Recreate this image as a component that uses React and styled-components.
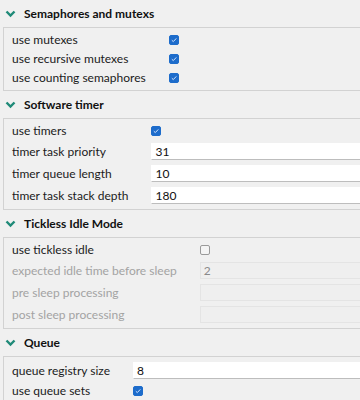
import React from 'react';
import styled, { createGlobalStyle } from 'styled-components';

const GlobalStyle = createGlobalStyle`
  html, body {
    margin: 0;
    padding: 0;
    background: #f0f0f0;
    overflow: hidden;
  }
  body {
    font-family: Lato, 'Noto Sans', 'Liberation Sans', sans-serif;
    font-size: 12px;
    color: #1b1b1b;
  }
`;

const sections = [
  {
    title: 'Semaphores and mutexs',
    rows: [
      { label: 'use mutexes', type: 'check', checked: true },
      { label: 'use recursive mutexes', type: 'check', checked: true },
      { label: 'use counting semaphores', type: 'check', checked: true },
    ],
  },
  {
    title: 'Software timer',
    rows: [
      { label: 'use timers', type: 'check', checked: true },
      { label: 'timer task priority', type: 'text', value: '31' },
      { label: 'timer queue length', type: 'text', value: '10' },
      { label: 'timer task stack depth', type: 'text', value: '180' },
    ],
  },
  {
    title: 'Tickless Idle Mode',
    rows: [
      { label: 'use tickless idle', type: 'check', checked: false },
      { label: 'expected idle time before sleep', type: 'text', value: '2', disabled: true },
      { label: 'pre sleep processing', type: 'text', value: '', disabled: true },
      { label: 'post sleep processing', type: 'text', value: '', disabled: true },
    ],
  },
  {
    title: 'Queue',
    rows: [
      { label: 'queue registry size', type: 'text', value: '8' },
      { label: 'use queue sets', type: 'check', checked: true },
    ],
  },
];

const Chevron = () => (
  <svg width="11" height="8" viewBox="0 0 11 8">
    <path d="M1.5 1.5 L5.5 5.5 L9.5 1.5" fill="none" stroke="#1f8a78" strokeWidth="2.4" />
  </svg>
);

const CheckBox = ({ checked }) => (
  <Box $checked={checked}>
    {checked && (
      <svg width="8" height="8" viewBox="0 0 8 8">
        <path d="M1.8 4.2 L3.3 5.6 L6.3 2.4" fill="none" stroke="#cfe2ff" strokeWidth="1" />
      </svg>
    )}
  </Box>
);

const App = () => {
  return (
    <Page>
      <GlobalStyle />
      {sections.map((s) => (
        <Section key={s.title}>
          <Header>
            <Chevron />
            <span>{s.title}</span>
          </Header>
          <Group>
            {s.rows.map((r) => (
              <React.Fragment key={r.label}>
                <Label $disabled={r.disabled}>{r.label}</Label>
                {r.type === 'check' ? (
                  <FieldCell>
                    <CheckBox checked={r.checked} />
                  </FieldCell>
                ) : (
                  <Input $disabled={r.disabled}>{r.value}</Input>
                )}
              </React.Fragment>
            ))}
          </Group>
        </Section>
      ))}
    </Page>
  );
};

const Page = styled.div`
  width: 360px;
  height: 400px;
  overflow: hidden;
`;

const Section = styled.section`
  display: flex;
  flex-direction: column;
`;

const Header = styled.div`
  height: 27px;
  display: flex;
  align-items: center;
  gap: 8px;
  padding-left: 5px;
  font-weight: 700;
  font-size: 12px;
  color: #111;

  svg {
    margin-top: 1px;
  }
`;

const Group = styled.div`
  margin-left: 3px;
  margin-right: -20px;
  border: 1px solid #d2d2d2;
  padding: 5px 0 5px 8px;
  display: grid;
  grid-template-columns: max-content 1fr;
  column-gap: 23px;
  row-gap: 5px;
  align-items: center;
`;

const Label = styled.div`
  line-height: 14px;
  white-space: nowrap;
  color: ${({ $disabled }) => ($disabled ? '#a3a3a3' : '#1b1b1b')};
`;

const FieldCell = styled.div`
  height: 14px;
  display: flex;
  align-items: center;
`;

const Box = styled.div`
  width: 10px;
  height: 10px;
  box-sizing: border-box;
  border-radius: 2px;
  display: flex;
  align-items: center;
  justify-content: center;
  background: ${({ $checked }) => ($checked ? '#1d6ccb' : '#f4f4f4')};
  border: 1px solid ${({ $checked }) => ($checked ? '#1d6ccb' : '#9a9a9a')};
`;

const Input = styled.div`
  height: 17px;
  box-sizing: border-box;
  padding: 0 3px;
  line-height: 16px;
  background: ${({ $disabled }) => ($disabled ? '#efefef' : '#ffffff')};
  border: 1px solid ${({ $disabled }) => ($disabled ? '#e4e4e4' : 'transparent')};
  border-bottom: 1px solid ${({ $disabled }) => ($disabled ? '#e4e4e4' : '#bdbdbd')};
  color: ${({ $disabled }) => ($disabled ? '#8a8a8a' : '#111')};
`;

export default App;
